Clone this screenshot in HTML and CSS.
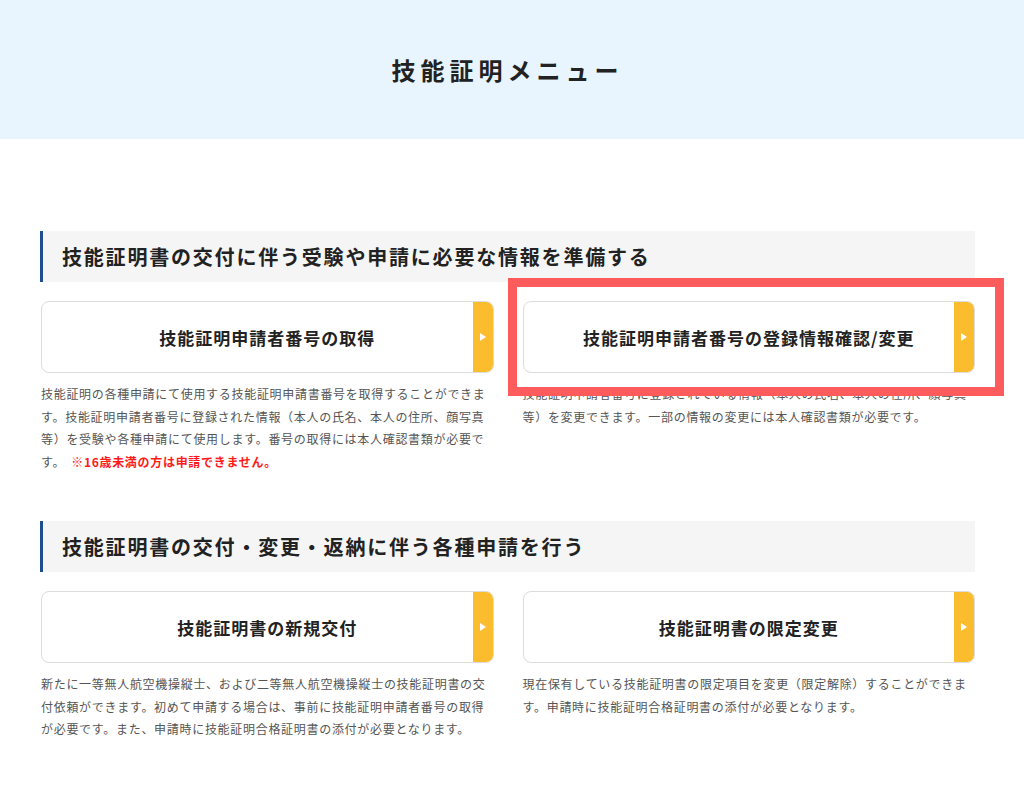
FILE: index.html
```html
<!DOCTYPE html>
<html lang="ja">
<head>
    <meta charset="UTF-8">
    <meta name="viewport" content="width=device-width, initial-scale=1.0">
    <title>技能証明メニュー</title>
    <link rel="stylesheet" href="styles.css">
</head>
<body>

<!-- Page title -->
<header class="page-header">
    <h1>技能証明メニュー</h1>
</header>

<main class="container">
    <!-- Section 1 -->
    <section class="menu-section">
        <h2 class="section-title">技能証明書の交付に伴う受験や申請に必要な情報を準備する</h2>
        <div class="menu-grid">
            <div class="menu-item">
                <a href="#" class="menu-card">
                    <span class="menu-label">技能証明申請者番号の取得</span>
                    <span class="menu-arrow"></span>
                </a>
                <p class="menu-desc">技能証明の各種申請にて使用する技能証明申請書番号を取得することができます。技能証明申請者番号に登録された情報（本人の氏名、本人の住所、顔写真等）を受験や各種申請にて使用します。番号の取得には本人確認書類が必要です。<strong class="note">※16歳未満の方は申請できません。</strong></p>
            </div>
            <div class="menu-item">
                <a href="#" class="menu-card">
                    <span class="menu-label">技能証明申請者番号の登録情報確認/変更</span>
                    <span class="menu-arrow"></span>
                </a>
                <p class="menu-desc">技能証明申請者番号に登録されている情報（本人の氏名、本人の住所、顔写真等）を変更できます。一部の情報の変更には本人確認書類が必要です。</p>
                <!-- highlight frame drawn over the card -->
                <div class="highlight"></div>
            </div>
        </div>
    </section>

    <!-- Section 2 -->
    <section class="menu-section">
        <h2 class="section-title">技能証明書の交付・変更・返納に伴う各種申請を行う</h2>
        <div class="menu-grid">
            <div class="menu-item">
                <a href="#" class="menu-card">
                    <span class="menu-label">技能証明書の新規交付</span>
                    <span class="menu-arrow"></span>
                </a>
                <p class="menu-desc">新たに一等無人航空機操縦士、および二等無人航空機操縦士の技能証明書の交付依頼ができます。初めて申請する場合は、事前に技能証明申請者番号の取得が必要です。また、申請時に技能証明合格証明書の添付が必要となります。</p>
            </div>
            <div class="menu-item">
                <a href="#" class="menu-card">
                    <span class="menu-label">技能証明書の限定変更</span>
                    <span class="menu-arrow"></span>
                </a>
                <p class="menu-desc">現在保有している技能証明書の限定項目を変更（限定解除）することができます。申請時に技能証明合格証明書の添付が必要となります。</p>
            </div>
        </div>
    </section>
</main>

</body>
</html>
```

FILE: styles.css
```css
body {
    margin: 0;
    font-family: "Noto Sans CJK JP", "Noto Sans", sans-serif;
    color: #222;
    background-color: #fff;
}

.page-header {
    height: 139px;
    background-color: #e8f5fe;
    display: flex;
    align-items: center;
}
.page-header h1 {
    width: 935px;
    margin: 0 0 0 40px;
    text-align: center;
    font-size: 24px;
    letter-spacing: 5px;
    font-weight: bold;
}

.container {
    width: 935px;
    margin-left: 40px;
    padding-top: 92px;
}

.menu-section {
    margin-bottom: 48px;
}
.section-title {
    margin: 0 0 19px;
    height: 51px;
    line-height: 51px;
    padding-left: 19px;
    border-left: 3px solid #1d4f8c;
    background-color: #f5f5f5;
    font-size: 20px;
    letter-spacing: 1.8px;
    font-weight: bold;
}

.menu-grid {
    display: grid;
    grid-template-columns: 1fr 1fr;
    column-gap: 29px;
    padding-left: 1px;
}
.menu-item {
    position: relative;
}

.menu-card {
    display: flex;
    height: 72px;
    box-sizing: border-box;
    padding-left: 20px;
    border: 1px solid #dcdcdc;
    border-radius: 8px;
    overflow: hidden;
    text-decoration: none;
    color: #222;
}
.menu-label {
    flex: 1;
    display: flex;
    align-items: center;
    justify-content: center;
    font-size: 17px;
    font-weight: bold;
    letter-spacing: 1px;
}
.menu-arrow {
    width: 20px;
    background-color: #fbbd2e;
    display: flex;
    align-items: center;
    justify-content: center;
}
.menu-arrow::before {
    content: "";
    border-left: 6px solid #fff;
    border-top: 4px solid transparent;
    border-bottom: 4px solid transparent;
}

.menu-desc {
    margin: 10px 0 0;
    font-size: 12px;
    letter-spacing: 0.7px;
    line-height: 22.5px;
    color: #555;
}
.menu-desc .note {
    color: #ff1a1a;
    margin-left: 6px;
}

.highlight {
    position: absolute;
    left: -15px;
    top: -23px;
    width: 496px;
    height: 118px;
    box-sizing: border-box;
    border: 9px solid #fe5b5c;
}
```
